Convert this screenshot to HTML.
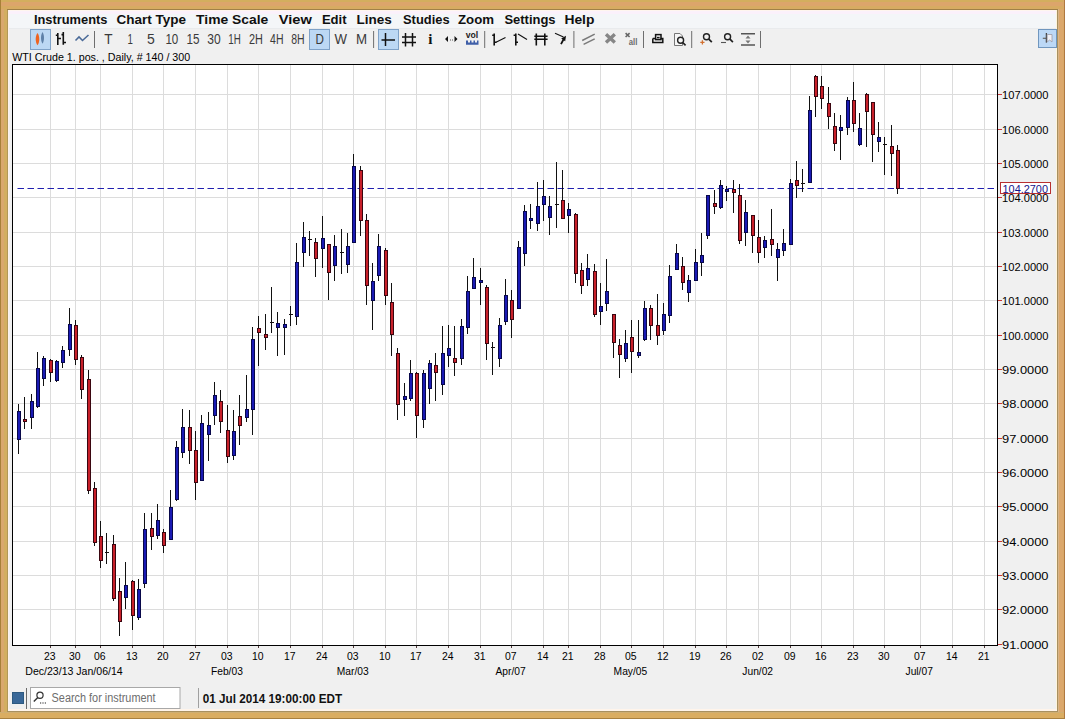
<!DOCTYPE html><html><head><meta charset="utf-8"><style>html,body{margin:0;padding:0;width:1065px;height:719px;overflow:hidden;background:#F0F0F0}svg{display:block}</style></head><body><svg width="1065" height="719" viewBox="0 0 1065 719" font-family="Liberation Sans, sans-serif"><defs><linearGradient id="topb" x1="0" y1="0" x2="0" y2="1"><stop offset="0" stop-color="#D2AC5A"/><stop offset="0.5" stop-color="#DDA56A"/><stop offset="0.85" stop-color="#D8A663"/><stop offset="1" stop-color="#B08A48"/></linearGradient><linearGradient id="menub" x1="0" y1="0" x2="0" y2="1"><stop offset="0" stop-color="#FBFBFE"/><stop offset="1" stop-color="#EEF1F5"/></linearGradient></defs>
<rect x="0" y="0" width="1065" height="719" fill="#DAAA68"/>
<rect x="0" y="0" width="1065" height="2" fill="#D3AE5E"/><rect x="0" y="2" width="1065" height="4" fill="#DCA56B"/><rect x="0" y="6" width="1065" height="3" fill="#D7AB62"/>
<rect x="0" y="0" width="1" height="719" fill="#A88038"/><rect x="1" y="9" width="3" height="703" fill="#D9A86E"/><rect x="4" y="9" width="3" height="703" fill="#D3AE60"/><rect x="7" y="9" width="1" height="703" fill="#B09858"/>
<rect x="1058" y="9" width="1" height="703" fill="#D8B488"/><rect x="1059" y="9" width="4" height="703" fill="#DCA86C"/><rect x="1063" y="0" width="1" height="719" fill="#D8A868"/><rect x="1064" y="0" width="1" height="719" fill="#B07840"/>
<rect x="0" y="712" width="1064" height="1" fill="#CFAE72"/><rect x="0" y="713" width="1064" height="5" fill="#DAAD62"/><rect x="0" y="718" width="1065" height="1" fill="#A88040"/>
<rect x="8" y="10" width="1049" height="701" fill="#F0F0F0"/>
<rect x="8" y="10" width="1049" height="18" fill="#F4F6F8"/><rect x="8" y="10" width="1049" height="1" fill="#FFF6EE"/><rect x="8" y="11" width="1049" height="3" fill="#FBF1FB"/><rect x="8" y="28" width="1049" height="1" fill="#E9EBED"/>
<rect x="8" y="709" width="1049" height="2" fill="#FFF4EA"/>
<rect x="8" y="10" width="1" height="699" fill="#FFF2EA"/><rect x="1056" y="10" width="1" height="699" fill="#FFF4DC"/>
<rect x="7" y="711" width="1051" height="1" fill="#A89060"/>
<rect x="1057" y="9" width="1" height="703" fill="#A89060"/>
<rect x="7" y="9" width="1051" height="1" fill="#A08048"/>
<text x="33.9" y="23.8" font-size="13" font-weight="bold" fill="#101010" text-anchor="start" textLength="73.6" lengthAdjust="spacingAndGlyphs">Instruments</text>
<text x="116.4" y="23.8" font-size="13" font-weight="bold" fill="#101010" text-anchor="start" textLength="69.6" lengthAdjust="spacingAndGlyphs">Chart Type</text>
<text x="196.1" y="23.8" font-size="13" font-weight="bold" fill="#101010" text-anchor="start" textLength="72.2" lengthAdjust="spacingAndGlyphs">Time Scale</text>
<text x="278.7" y="23.8" font-size="13" font-weight="bold" fill="#101010" text-anchor="start" textLength="33.1" lengthAdjust="spacingAndGlyphs">View</text>
<text x="321.9" y="23.8" font-size="13" font-weight="bold" fill="#101010" text-anchor="start" textLength="24.7" lengthAdjust="spacingAndGlyphs">Edit</text>
<text x="356.4" y="23.8" font-size="13" font-weight="bold" fill="#101010" text-anchor="start" textLength="35.3" lengthAdjust="spacingAndGlyphs">Lines</text>
<text x="403.0" y="23.8" font-size="13" font-weight="bold" fill="#101010" text-anchor="start" textLength="46.6" lengthAdjust="spacingAndGlyphs">Studies</text>
<text x="458.0" y="23.8" font-size="13" font-weight="bold" fill="#101010" text-anchor="start" textLength="36.0" lengthAdjust="spacingAndGlyphs">Zoom</text>
<text x="504.4" y="23.8" font-size="13" font-weight="bold" fill="#101010" text-anchor="start" textLength="51.2" lengthAdjust="spacingAndGlyphs">Settings</text>
<text x="564.4" y="23.8" font-size="13" font-weight="bold" fill="#101010" text-anchor="start" textLength="30.0" lengthAdjust="spacingAndGlyphs">Help</text>
<rect x="30.5" y="29.5" width="20" height="20" fill="#BCD8F4" stroke="#7FA2C8" stroke-width="1"/>
<path d="M37.5 32.9 C39.9 36 39.9 42 37.5 45.3 C35.1 42 35.1 36 37.5 32.9 Z" fill="#EE6422"/>
<path d="M42.5 32.1 C44.5 35 44.5 41 42.5 43.8 C40.5 41 40.5 35 42.5 32.1 Z" fill="#5E80A8"/>
<g stroke="#111" stroke-width="1.6" fill="none"><path d="M57.8 33 V45 M55.8 35.3 H57.8 M57.8 38.5 H61 M63.3 32 V44.7 M61.5 34.6 H63.3 M63.3 42.5 H66"/></g>
<path d="M75.5 40.5 L79 37 L82.5 40.5 L88.5 35" stroke="#4A6A98" stroke-width="1.6" fill="none"/>
<rect x="94.0" y="31" width="1" height="17" fill="#6E6E6E"/>
<rect x="309.5" y="29.5" width="20" height="20" fill="#BCD8F4" stroke="#7FA2C8" stroke-width="1"/>
<text x="104.2" y="43.9" font-size="14.3" font-weight="normal" fill="#3A3A3A" text-anchor="start" textLength="8.3" lengthAdjust="spacingAndGlyphs">T</text>
<text x="127.4" y="43.9" font-size="14.3" font-weight="normal" fill="#3A3A3A" text-anchor="start" textLength="5.4" lengthAdjust="spacingAndGlyphs">1</text>
<text x="147.1" y="43.9" font-size="14.3" font-weight="normal" fill="#3A3A3A" text-anchor="start" textLength="7.8" lengthAdjust="spacingAndGlyphs">5</text>
<text x="165.4" y="43.9" font-size="14.3" font-weight="normal" fill="#3A3A3A" text-anchor="start" textLength="12.9" lengthAdjust="spacingAndGlyphs">10</text>
<text x="186.5" y="43.9" font-size="14.3" font-weight="normal" fill="#3A3A3A" text-anchor="start" textLength="13.0" lengthAdjust="spacingAndGlyphs">15</text>
<text x="207.20000000000002" y="43.9" font-size="14.3" font-weight="normal" fill="#3A3A3A" text-anchor="start" textLength="13.4" lengthAdjust="spacingAndGlyphs">30</text>
<text x="228.3" y="43.9" font-size="14.3" font-weight="normal" fill="#3A3A3A" text-anchor="start" textLength="12.5" lengthAdjust="spacingAndGlyphs">1H</text>
<text x="249.0" y="43.9" font-size="14.3" font-weight="normal" fill="#3A3A3A" text-anchor="start" textLength="13.9" lengthAdjust="spacingAndGlyphs">2H</text>
<text x="270.09999999999997" y="43.9" font-size="14.3" font-weight="normal" fill="#3A3A3A" text-anchor="start" textLength="13.4" lengthAdjust="spacingAndGlyphs">4H</text>
<text x="291.2" y="43.9" font-size="14.3" font-weight="normal" fill="#3A3A3A" text-anchor="start" textLength="13.4" lengthAdjust="spacingAndGlyphs">8H</text>
<text x="315.4" y="43.9" font-size="14.3" font-weight="normal" fill="#3A3A3A" text-anchor="start" textLength="8.4" lengthAdjust="spacingAndGlyphs">D</text>
<text x="334.4" y="43.9" font-size="14.3" font-weight="normal" fill="#3A3A3A" text-anchor="start" textLength="12.5" lengthAdjust="spacingAndGlyphs">W</text>
<text x="356.0" y="43.9" font-size="14.3" font-weight="normal" fill="#3A3A3A" text-anchor="start" textLength="11.1" lengthAdjust="spacingAndGlyphs">M</text>
<rect x="373.1" y="31" width="1" height="17" fill="#6E6E6E"/>
<rect x="378.5" y="29.5" width="20" height="20" fill="#BCD8F4" stroke="#7FA2C8" stroke-width="1"/>
<path d="M381.5 40 H395 M385.5 33 V46" stroke="#111" stroke-width="1.5"/>
<path d="M402 37 H416 M402 42.5 H416 M405.5 33 V46.5 M412.5 33 V46.5" stroke="#111" stroke-width="1.5"/>
<text x="430.3" y="44.2" font-size="15" font-weight="bold" fill="#111" text-anchor="middle" font-family="Liberation Serif, serif">i</text>
<path d="M445 39 L448 36 V42 Z M457.5 39 L454.5 36 V42 Z" fill="#111"/><rect x="450" y="39.5" width="1" height="1" fill="#555"/><rect x="452" y="39.5" width="1" height="1" fill="#555"/>
<text x="471.9" y="38.3" font-size="9" font-weight="bold" fill="#222" text-anchor="middle" textLength="12.5" lengthAdjust="spacingAndGlyphs">vol</text>
<path d="M466 44.8 H478.5 V40.5 H477 V42.5 H475 V40.5 H473.5 V42.5 H471.5 V40.5 H470 V42.5 H468 V40.5 H466 Z" fill="#3F5FA8"/>
<rect x="484.2" y="31" width="1" height="17" fill="#6E6E6E"/>
<g stroke="#111" stroke-width="1.6" fill="none"><path d="M494.2 33.5 V45.5 M492.2 35.2 H494.2 M494.2 42.3 H496.5"/><path stroke-width="1.1" d="M496 42.3 L505.5 37.5"/><path d="M515.8 33.5 V45.5 M513.6 35.2 H515.8 M515.8 42.3 H518"/><path stroke-width="1.1" d="M518 34 L527 39.5"/><path d="M536.3 33.5 V45.5 M544.8 33.5 V45.5 M534.3 36.3 H547.6 M534.3 39.3 H547.6"/><path stroke-width="1.1" d="M555 33.3 L563.5 37"/><path stroke-width="1.8" d="M561 44.2 L564 38.5"/></g>
<path d="M566 35.8 L565.2 41.2 L561.2 38.6 Z" fill="#111"/>
<rect x="573.4" y="31" width="1" height="17" fill="#6E6E6E"/>
<path d="M582.2 40.5 L594.7 34.2 M583.6 44.4 L594.7 38.8" stroke="#7A7A7A" stroke-width="1.5"/>
<path d="M606 34.3 L614.8 42.4 M614.8 34.3 L606 42.4" stroke="#868686" stroke-width="3.4"/>
<path d="M625.6 33.2 L629.6 37 M629.6 33.2 L625.6 37" stroke="#666" stroke-width="1.6"/>
<text x="628.8" y="44.8" font-size="8.5" font-weight="bold" fill="#6A6A6A" text-anchor="start" textLength="8.6" lengthAdjust="spacingAndGlyphs">all</text>
<rect x="643.0" y="31" width="1" height="17" fill="#6E6E6E"/>
<g stroke="#111" stroke-width="1.5" fill="none"><rect x="655.6" y="34.6" width="5.4" height="5"/><path d="M657 37.6 H659.6"/><path d="M652.8 38.4 V42.4 H662.8 V38.4 H660.5 M655.6 38.4 H652.8"/></g>
<path d="M674.5 33.5 H680 L682.5 36 V45.5 H674.5 Z" stroke="#777" stroke-width="1" fill="#F6F6F6"/>
<circle cx="680.6" cy="40.3" r="3" stroke="#222" stroke-width="1.4" fill="#F6F6F6"/><path d="M682.8 42.6 L685.6 45.4" stroke="#222" stroke-width="1.6"/>
<rect x="691.2" y="31" width="1" height="17" fill="#6E6E6E"/>
<circle cx="706.5" cy="36.7" r="3" stroke="#222" stroke-width="1.4" fill="none"/><path d="M708.6 38.8 L711.8 42.1" stroke="#222" stroke-width="1.7"/>
<path d="M700.3 42.3 H704.5 M702.4 40.2 V44.4" stroke="#D27030" stroke-width="1.3"/>
<circle cx="727.6" cy="36.7" r="3" stroke="#222" stroke-width="1.4" fill="none"/><path d="M729.7 38.8 L732.9 42.1" stroke="#222" stroke-width="1.7"/>
<path d="M721 42.5 H726" stroke="#555" stroke-width="1.1"/>
<path d="M741 33.8 H755 M741 45 H755" stroke="#555" stroke-width="1.6"/><path d="M748 35.5 L750.5 38.5 H745.5 Z M748 43.5 L750.5 40.5 H745.5 Z" fill="#777"/>
<rect x="760.0" y="31" width="1" height="17" fill="#6E6E6E"/>
<rect x="1038.5" y="29.5" width="18" height="18" fill="#BCD8F6" stroke="#7096BE"/>
<path d="M1042.8 38.3 H1046" stroke="#666" stroke-width="1.2"/><path d="M1046.4 33 V42.6" stroke="#444" stroke-width="1.3"/>
<path d="M1047.2 34.5 H1052 V42 L1049.6 40 L1047.2 42 Z" fill="#F2F0F4" stroke="#9A9AA8" stroke-width="0.8"/>
<text x="12.2" y="60.9" font-size="11" font-weight="normal" fill="#000" text-anchor="start" textLength="178" lengthAdjust="spacingAndGlyphs">WTI Crude 1. pos. , Daily, # 140 / 300</text>
<rect x="13" y="65" width="984" height="580" fill="#FFFFFF"/>
<path d="M998 644.5 H1002" stroke="#C83838" stroke-width="1"/>
<text x="1002" y="648.8" font-size="11" font-weight="normal" fill="#000" text-anchor="start" textLength="46.5" lengthAdjust="spacingAndGlyphs">91.0000</text>
<path d="M13 609.5 H997" stroke="#DCDCDC" stroke-width="1"/>
<path d="M998 609.5 H1002" stroke="#C83838" stroke-width="1"/>
<text x="1002" y="613.8" font-size="11" font-weight="normal" fill="#000" text-anchor="start" textLength="46.5" lengthAdjust="spacingAndGlyphs">92.0000</text>
<path d="M13 575.5 H997" stroke="#DCDCDC" stroke-width="1"/>
<path d="M998 575.5 H1002" stroke="#C83838" stroke-width="1"/>
<text x="1002" y="579.8" font-size="11" font-weight="normal" fill="#000" text-anchor="start" textLength="46.5" lengthAdjust="spacingAndGlyphs">93.0000</text>
<path d="M13 541.5 H997" stroke="#DCDCDC" stroke-width="1"/>
<path d="M998 541.5 H1002" stroke="#C83838" stroke-width="1"/>
<text x="1002" y="545.8" font-size="11" font-weight="normal" fill="#000" text-anchor="start" textLength="46.5" lengthAdjust="spacingAndGlyphs">94.0000</text>
<path d="M13 506.5 H997" stroke="#DCDCDC" stroke-width="1"/>
<path d="M998 506.5 H1002" stroke="#C83838" stroke-width="1"/>
<text x="1002" y="510.8" font-size="11" font-weight="normal" fill="#000" text-anchor="start" textLength="46.5" lengthAdjust="spacingAndGlyphs">95.0000</text>
<path d="M13 472.5 H997" stroke="#DCDCDC" stroke-width="1"/>
<path d="M998 472.5 H1002" stroke="#C83838" stroke-width="1"/>
<text x="1002" y="476.8" font-size="11" font-weight="normal" fill="#000" text-anchor="start" textLength="46.5" lengthAdjust="spacingAndGlyphs">96.0000</text>
<path d="M13 438.5 H997" stroke="#DCDCDC" stroke-width="1"/>
<path d="M998 438.5 H1002" stroke="#C83838" stroke-width="1"/>
<text x="1002" y="442.8" font-size="11" font-weight="normal" fill="#000" text-anchor="start" textLength="46.5" lengthAdjust="spacingAndGlyphs">97.0000</text>
<path d="M13 403.5 H997" stroke="#DCDCDC" stroke-width="1"/>
<path d="M998 403.5 H1002" stroke="#C83838" stroke-width="1"/>
<text x="1002" y="407.8" font-size="11" font-weight="normal" fill="#000" text-anchor="start" textLength="46.5" lengthAdjust="spacingAndGlyphs">98.0000</text>
<path d="M13 369.5 H997" stroke="#DCDCDC" stroke-width="1"/>
<path d="M998 369.5 H1002" stroke="#C83838" stroke-width="1"/>
<text x="1002" y="373.8" font-size="11" font-weight="normal" fill="#000" text-anchor="start" textLength="46.5" lengthAdjust="spacingAndGlyphs">99.0000</text>
<path d="M13 335.5 H997" stroke="#DCDCDC" stroke-width="1"/>
<path d="M998 335.5 H1002" stroke="#C83838" stroke-width="1"/>
<text x="1002" y="339.8" font-size="11" font-weight="normal" fill="#000" text-anchor="start" textLength="46.5" lengthAdjust="spacingAndGlyphs">100.0000</text>
<path d="M13 300.5 H997" stroke="#DCDCDC" stroke-width="1"/>
<path d="M998 300.5 H1002" stroke="#C83838" stroke-width="1"/>
<text x="1002" y="304.8" font-size="11" font-weight="normal" fill="#000" text-anchor="start" textLength="46.5" lengthAdjust="spacingAndGlyphs">101.0000</text>
<path d="M13 266.5 H997" stroke="#DCDCDC" stroke-width="1"/>
<path d="M998 266.5 H1002" stroke="#C83838" stroke-width="1"/>
<text x="1002" y="270.8" font-size="11" font-weight="normal" fill="#000" text-anchor="start" textLength="46.5" lengthAdjust="spacingAndGlyphs">102.0000</text>
<path d="M13 232.5 H997" stroke="#DCDCDC" stroke-width="1"/>
<path d="M998 232.5 H1002" stroke="#C83838" stroke-width="1"/>
<text x="1002" y="236.8" font-size="11" font-weight="normal" fill="#000" text-anchor="start" textLength="46.5" lengthAdjust="spacingAndGlyphs">103.0000</text>
<path d="M13 197.5 H997" stroke="#DCDCDC" stroke-width="1"/>
<path d="M998 197.5 H1002" stroke="#C83838" stroke-width="1"/>
<text x="1002" y="201.8" font-size="11" font-weight="normal" fill="#000" text-anchor="start" textLength="46.5" lengthAdjust="spacingAndGlyphs">104.0000</text>
<path d="M13 163.5 H997" stroke="#DCDCDC" stroke-width="1"/>
<path d="M998 163.5 H1002" stroke="#C83838" stroke-width="1"/>
<text x="1002" y="167.8" font-size="11" font-weight="normal" fill="#000" text-anchor="start" textLength="46.5" lengthAdjust="spacingAndGlyphs">105.0000</text>
<path d="M13 129.5 H997" stroke="#DCDCDC" stroke-width="1"/>
<path d="M998 129.5 H1002" stroke="#C83838" stroke-width="1"/>
<text x="1002" y="133.8" font-size="11" font-weight="normal" fill="#000" text-anchor="start" textLength="46.5" lengthAdjust="spacingAndGlyphs">106.0000</text>
<path d="M13 94.5 H997" stroke="#DCDCDC" stroke-width="1"/>
<path d="M998 94.5 H1002" stroke="#C83838" stroke-width="1"/>
<text x="1002" y="98.8" font-size="11" font-weight="normal" fill="#000" text-anchor="start" textLength="46.5" lengthAdjust="spacingAndGlyphs">107.0000</text>
<path d="M50.5 65 V645" stroke="#DCDCDC" stroke-width="1"/>
<path d="M50.5 646 V648" stroke="#503838" stroke-width="1"/>
<text x="49.7" y="659.9" font-size="11" font-weight="normal" fill="#000" text-anchor="middle" textLength="11.6" lengthAdjust="spacingAndGlyphs">23</text>
<path d="M75.5 65 V645" stroke="#DCDCDC" stroke-width="1"/>
<path d="M75.5 646 V648" stroke="#503838" stroke-width="1"/>
<text x="74.7" y="659.9" font-size="11" font-weight="normal" fill="#000" text-anchor="middle" textLength="11.6" lengthAdjust="spacingAndGlyphs">30</text>
<path d="M100.5 65 V645" stroke="#DCDCDC" stroke-width="1"/>
<path d="M100.5 646 V648" stroke="#503838" stroke-width="1"/>
<text x="99.7" y="659.9" font-size="11" font-weight="normal" fill="#000" text-anchor="middle" textLength="11.6" lengthAdjust="spacingAndGlyphs">06</text>
<path d="M132.5 65 V645" stroke="#DCDCDC" stroke-width="1"/>
<path d="M132.5 646 V648" stroke="#503838" stroke-width="1"/>
<text x="131.7" y="659.9" font-size="11" font-weight="normal" fill="#000" text-anchor="middle" textLength="11.6" lengthAdjust="spacingAndGlyphs">13</text>
<path d="M163.5 65 V645" stroke="#DCDCDC" stroke-width="1"/>
<path d="M163.5 646 V648" stroke="#503838" stroke-width="1"/>
<text x="162.7" y="659.9" font-size="11" font-weight="normal" fill="#000" text-anchor="middle" textLength="11.6" lengthAdjust="spacingAndGlyphs">20</text>
<path d="M195.5 65 V645" stroke="#DCDCDC" stroke-width="1"/>
<path d="M195.5 646 V648" stroke="#503838" stroke-width="1"/>
<text x="194.7" y="659.9" font-size="11" font-weight="normal" fill="#000" text-anchor="middle" textLength="11.6" lengthAdjust="spacingAndGlyphs">27</text>
<path d="M227.5 65 V645" stroke="#DCDCDC" stroke-width="1"/>
<path d="M227.5 646 V648" stroke="#503838" stroke-width="1"/>
<text x="226.7" y="659.9" font-size="11" font-weight="normal" fill="#000" text-anchor="middle" textLength="11.6" lengthAdjust="spacingAndGlyphs">03</text>
<path d="M258.5 65 V645" stroke="#DCDCDC" stroke-width="1"/>
<path d="M258.5 646 V648" stroke="#503838" stroke-width="1"/>
<text x="257.7" y="659.9" font-size="11" font-weight="normal" fill="#000" text-anchor="middle" textLength="11.6" lengthAdjust="spacingAndGlyphs">10</text>
<path d="M290.5 65 V645" stroke="#DCDCDC" stroke-width="1"/>
<path d="M290.5 646 V648" stroke="#503838" stroke-width="1"/>
<text x="289.7" y="659.9" font-size="11" font-weight="normal" fill="#000" text-anchor="middle" textLength="11.6" lengthAdjust="spacingAndGlyphs">17</text>
<path d="M322.5 65 V645" stroke="#DCDCDC" stroke-width="1"/>
<path d="M322.5 646 V648" stroke="#503838" stroke-width="1"/>
<text x="321.7" y="659.9" font-size="11" font-weight="normal" fill="#000" text-anchor="middle" textLength="11.6" lengthAdjust="spacingAndGlyphs">24</text>
<path d="M353.5 65 V645" stroke="#DCDCDC" stroke-width="1"/>
<path d="M353.5 646 V648" stroke="#503838" stroke-width="1"/>
<text x="352.7" y="659.9" font-size="11" font-weight="normal" fill="#000" text-anchor="middle" textLength="11.6" lengthAdjust="spacingAndGlyphs">03</text>
<path d="M385.5 65 V645" stroke="#DCDCDC" stroke-width="1"/>
<path d="M385.5 646 V648" stroke="#503838" stroke-width="1"/>
<text x="384.7" y="659.9" font-size="11" font-weight="normal" fill="#000" text-anchor="middle" textLength="11.6" lengthAdjust="spacingAndGlyphs">10</text>
<path d="M416.5 65 V645" stroke="#DCDCDC" stroke-width="1"/>
<path d="M416.5 646 V648" stroke="#503838" stroke-width="1"/>
<text x="415.7" y="659.9" font-size="11" font-weight="normal" fill="#000" text-anchor="middle" textLength="11.6" lengthAdjust="spacingAndGlyphs">17</text>
<path d="M448.5 65 V645" stroke="#DCDCDC" stroke-width="1"/>
<path d="M448.5 646 V648" stroke="#503838" stroke-width="1"/>
<text x="447.7" y="659.9" font-size="11" font-weight="normal" fill="#000" text-anchor="middle" textLength="11.6" lengthAdjust="spacingAndGlyphs">24</text>
<path d="M480.5 65 V645" stroke="#DCDCDC" stroke-width="1"/>
<path d="M480.5 646 V648" stroke="#503838" stroke-width="1"/>
<text x="479.7" y="659.9" font-size="11" font-weight="normal" fill="#000" text-anchor="middle" textLength="11.6" lengthAdjust="spacingAndGlyphs">31</text>
<path d="M511.5 65 V645" stroke="#DCDCDC" stroke-width="1"/>
<path d="M511.5 646 V648" stroke="#503838" stroke-width="1"/>
<text x="510.7" y="659.9" font-size="11" font-weight="normal" fill="#000" text-anchor="middle" textLength="11.6" lengthAdjust="spacingAndGlyphs">07</text>
<path d="M543.5 65 V645" stroke="#DCDCDC" stroke-width="1"/>
<path d="M543.5 646 V648" stroke="#503838" stroke-width="1"/>
<text x="542.7" y="659.9" font-size="11" font-weight="normal" fill="#000" text-anchor="middle" textLength="11.6" lengthAdjust="spacingAndGlyphs">14</text>
<path d="M568.5 65 V645" stroke="#DCDCDC" stroke-width="1"/>
<path d="M568.5 646 V648" stroke="#503838" stroke-width="1"/>
<text x="567.7" y="659.9" font-size="11" font-weight="normal" fill="#000" text-anchor="middle" textLength="11.6" lengthAdjust="spacingAndGlyphs">21</text>
<path d="M600.5 65 V645" stroke="#DCDCDC" stroke-width="1"/>
<path d="M600.5 646 V648" stroke="#503838" stroke-width="1"/>
<text x="599.7" y="659.9" font-size="11" font-weight="normal" fill="#000" text-anchor="middle" textLength="11.6" lengthAdjust="spacingAndGlyphs">28</text>
<path d="M631.5 65 V645" stroke="#DCDCDC" stroke-width="1"/>
<path d="M631.5 646 V648" stroke="#503838" stroke-width="1"/>
<text x="630.7" y="659.9" font-size="11" font-weight="normal" fill="#000" text-anchor="middle" textLength="11.6" lengthAdjust="spacingAndGlyphs">05</text>
<path d="M663.5 65 V645" stroke="#DCDCDC" stroke-width="1"/>
<path d="M663.5 646 V648" stroke="#503838" stroke-width="1"/>
<text x="662.7" y="659.9" font-size="11" font-weight="normal" fill="#000" text-anchor="middle" textLength="11.6" lengthAdjust="spacingAndGlyphs">12</text>
<path d="M695.5 65 V645" stroke="#DCDCDC" stroke-width="1"/>
<path d="M695.5 646 V648" stroke="#503838" stroke-width="1"/>
<text x="694.7" y="659.9" font-size="11" font-weight="normal" fill="#000" text-anchor="middle" textLength="11.6" lengthAdjust="spacingAndGlyphs">19</text>
<path d="M726.5 65 V645" stroke="#DCDCDC" stroke-width="1"/>
<path d="M726.5 646 V648" stroke="#503838" stroke-width="1"/>
<text x="725.7" y="659.9" font-size="11" font-weight="normal" fill="#000" text-anchor="middle" textLength="11.6" lengthAdjust="spacingAndGlyphs">26</text>
<path d="M758.5 65 V645" stroke="#DCDCDC" stroke-width="1"/>
<path d="M758.5 646 V648" stroke="#503838" stroke-width="1"/>
<text x="757.7" y="659.9" font-size="11" font-weight="normal" fill="#000" text-anchor="middle" textLength="11.6" lengthAdjust="spacingAndGlyphs">02</text>
<path d="M790.5 65 V645" stroke="#DCDCDC" stroke-width="1"/>
<path d="M790.5 646 V648" stroke="#503838" stroke-width="1"/>
<text x="789.7" y="659.9" font-size="11" font-weight="normal" fill="#000" text-anchor="middle" textLength="11.6" lengthAdjust="spacingAndGlyphs">09</text>
<path d="M821.5 65 V645" stroke="#DCDCDC" stroke-width="1"/>
<path d="M821.5 646 V648" stroke="#503838" stroke-width="1"/>
<text x="820.7" y="659.9" font-size="11" font-weight="normal" fill="#000" text-anchor="middle" textLength="11.6" lengthAdjust="spacingAndGlyphs">16</text>
<path d="M853.5 65 V645" stroke="#DCDCDC" stroke-width="1"/>
<path d="M853.5 646 V648" stroke="#503838" stroke-width="1"/>
<text x="852.7" y="659.9" font-size="11" font-weight="normal" fill="#000" text-anchor="middle" textLength="11.6" lengthAdjust="spacingAndGlyphs">23</text>
<path d="M884.5 65 V645" stroke="#DCDCDC" stroke-width="1"/>
<path d="M884.5 646 V648" stroke="#503838" stroke-width="1"/>
<text x="883.7" y="659.9" font-size="11" font-weight="normal" fill="#000" text-anchor="middle" textLength="11.6" lengthAdjust="spacingAndGlyphs">30</text>
<path d="M920.5 65 V645" stroke="#DCDCDC" stroke-width="1"/>
<path d="M920.5 646 V648" stroke="#503838" stroke-width="1"/>
<text x="919.7" y="659.9" font-size="11" font-weight="normal" fill="#000" text-anchor="middle" textLength="11.6" lengthAdjust="spacingAndGlyphs">07</text>
<path d="M952.5 65 V645" stroke="#DCDCDC" stroke-width="1"/>
<path d="M952.5 646 V648" stroke="#503838" stroke-width="1"/>
<text x="951.7" y="659.9" font-size="11" font-weight="normal" fill="#000" text-anchor="middle" textLength="11.6" lengthAdjust="spacingAndGlyphs">14</text>
<path d="M984.5 65 V645" stroke="#DCDCDC" stroke-width="1"/>
<path d="M984.5 646 V648" stroke="#503838" stroke-width="1"/>
<text x="983.7" y="659.9" font-size="11" font-weight="normal" fill="#000" text-anchor="middle" textLength="11.6" lengthAdjust="spacingAndGlyphs">21</text>
<text x="25.3" y="675.2" font-size="11" font-weight="normal" fill="#000" text-anchor="start" textLength="97.4" lengthAdjust="spacingAndGlyphs">Dec/23/13 Jan/06/14</text>
<text x="226.9" y="675.2" font-size="11" font-weight="normal" fill="#000" text-anchor="middle" textLength="31.88" lengthAdjust="spacingAndGlyphs">Feb/03</text>
<text x="352.7" y="675.2" font-size="11" font-weight="normal" fill="#000" text-anchor="middle" textLength="31.85" lengthAdjust="spacingAndGlyphs">Mar/03</text>
<text x="510.6" y="675.2" font-size="11" font-weight="normal" fill="#000" text-anchor="middle" textLength="30.17" lengthAdjust="spacingAndGlyphs">Apr/07</text>
<text x="630.4" y="675.2" font-size="11" font-weight="normal" fill="#000" text-anchor="middle" textLength="33.57" lengthAdjust="spacingAndGlyphs">May/05</text>
<text x="757.7" y="675.2" font-size="11" font-weight="normal" fill="#000" text-anchor="middle" textLength="30.75" lengthAdjust="spacingAndGlyphs">Jun/02</text>
<text x="919.2" y="675.2" font-size="11" font-weight="normal" fill="#000" text-anchor="middle" textLength="27.32" lengthAdjust="spacingAndGlyphs">Jul/07</text>
<path d="M17.5 188.5 H994" stroke="#2020B0" stroke-width="1.1" stroke-dasharray="6.5,3.5"/>
<rect x="18" y="404" width="1" height="50" fill="#111"/>
<rect x="17.5" y="411.5" width="3" height="28" fill="#1A1AB4" stroke="#08084A" stroke-width="1"/>
<rect x="24" y="397" width="1" height="32" fill="#111"/>
<rect x="23.5" y="419.5" width="3" height="2" fill="#C8202A" stroke="#3A0610" stroke-width="1"/>
<rect x="31" y="394" width="1" height="35" fill="#111"/>
<rect x="30.5" y="401.5" width="3" height="16" fill="#1A1AB4" stroke="#08084A" stroke-width="1"/>
<rect x="37" y="352" width="1" height="56" fill="#111"/>
<rect x="36.5" y="368.5" width="3" height="38" fill="#1A1AB4" stroke="#08084A" stroke-width="1"/>
<rect x="43" y="356" width="1" height="30" fill="#111"/>
<rect x="42.5" y="358.5" width="3" height="20" fill="#1A1AB4" stroke="#08084A" stroke-width="1"/>
<rect x="50" y="359" width="1" height="23" fill="#111"/>
<rect x="49.5" y="360.5" width="3" height="12" fill="#C8202A" stroke="#3A0610" stroke-width="1"/>
<rect x="56" y="360" width="1" height="22" fill="#111"/>
<rect x="55.5" y="361.5" width="3" height="19" fill="#1A1AB4" stroke="#08084A" stroke-width="1"/>
<rect x="62" y="346" width="1" height="22" fill="#111"/>
<rect x="61.5" y="350.5" width="3" height="12" fill="#1A1AB4" stroke="#08084A" stroke-width="1"/>
<rect x="69" y="308" width="1" height="48" fill="#111"/>
<rect x="68.5" y="324.5" width="3" height="25" fill="#1A1AB4" stroke="#08084A" stroke-width="1"/>
<rect x="75" y="320" width="1" height="45" fill="#111"/>
<rect x="74.5" y="325.5" width="3" height="34" fill="#C8202A" stroke="#3A0610" stroke-width="1"/>
<rect x="81" y="355" width="1" height="44" fill="#111"/>
<rect x="80.5" y="357.5" width="3" height="32" fill="#C8202A" stroke="#3A0610" stroke-width="1"/>
<rect x="88" y="370" width="1" height="124" fill="#111"/>
<rect x="87.5" y="379.5" width="3" height="111" fill="#C8202A" stroke="#3A0610" stroke-width="1"/>
<rect x="94" y="482" width="1" height="64" fill="#111"/>
<rect x="93.5" y="488.5" width="3" height="54" fill="#C8202A" stroke="#3A0610" stroke-width="1"/>
<rect x="100" y="521" width="1" height="47" fill="#111"/>
<rect x="99.5" y="536.5" width="3" height="24" fill="#C8202A" stroke="#3A0610" stroke-width="1"/>
<rect x="106" y="533" width="1" height="31" fill="#111"/>
<rect x="105" y="552" width="4" height="1" fill="#151010"/>
<rect x="113" y="535" width="1" height="66" fill="#111"/>
<rect x="112.5" y="544.5" width="3" height="54" fill="#C8202A" stroke="#3A0610" stroke-width="1"/>
<rect x="119" y="578" width="1" height="58" fill="#111"/>
<rect x="118.5" y="591.5" width="3" height="30" fill="#C8202A" stroke="#3A0610" stroke-width="1"/>
<rect x="125" y="562" width="1" height="47" fill="#111"/>
<rect x="124.5" y="585.5" width="3" height="12" fill="#1A1AB4" stroke="#08084A" stroke-width="1"/>
<rect x="132" y="580" width="1" height="50" fill="#111"/>
<rect x="131.5" y="581.5" width="3" height="34" fill="#C8202A" stroke="#3A0610" stroke-width="1"/>
<rect x="138" y="579" width="1" height="41" fill="#111"/>
<rect x="137.5" y="589.5" width="3" height="28" fill="#1A1AB4" stroke="#08084A" stroke-width="1"/>
<rect x="144" y="513" width="1" height="75" fill="#111"/>
<rect x="143.5" y="529.5" width="3" height="54" fill="#1A1AB4" stroke="#08084A" stroke-width="1"/>
<rect x="151" y="513" width="1" height="37" fill="#111"/>
<rect x="150.5" y="528.5" width="3" height="8" fill="#C8202A" stroke="#3A0610" stroke-width="1"/>
<rect x="157" y="504" width="1" height="35" fill="#111"/>
<rect x="156.5" y="520.5" width="3" height="15" fill="#1A1AB4" stroke="#08084A" stroke-width="1"/>
<rect x="163" y="529" width="1" height="24" fill="#111"/>
<rect x="162.5" y="532.5" width="3" height="13" fill="#C8202A" stroke="#3A0610" stroke-width="1"/>
<rect x="170" y="490" width="1" height="50" fill="#111"/>
<rect x="169.5" y="507.5" width="3" height="32" fill="#1A1AB4" stroke="#08084A" stroke-width="1"/>
<rect x="176" y="441" width="1" height="60" fill="#111"/>
<rect x="175.5" y="447.5" width="3" height="52" fill="#1A1AB4" stroke="#08084A" stroke-width="1"/>
<rect x="182" y="409" width="1" height="49" fill="#111"/>
<rect x="181.5" y="427.5" width="3" height="25" fill="#1A1AB4" stroke="#08084A" stroke-width="1"/>
<rect x="189" y="410" width="1" height="54" fill="#111"/>
<rect x="188.5" y="427.5" width="3" height="23" fill="#C8202A" stroke="#3A0610" stroke-width="1"/>
<rect x="195" y="431" width="1" height="69" fill="#111"/>
<rect x="194.5" y="450.5" width="3" height="32" fill="#C8202A" stroke="#3A0610" stroke-width="1"/>
<rect x="201" y="415" width="1" height="66" fill="#111"/>
<rect x="200.5" y="423.5" width="3" height="57" fill="#1A1AB4" stroke="#08084A" stroke-width="1"/>
<rect x="208" y="412" width="1" height="49" fill="#111"/>
<rect x="207.5" y="425.5" width="3" height="9" fill="#1A1AB4" stroke="#08084A" stroke-width="1"/>
<rect x="214" y="382" width="1" height="43" fill="#111"/>
<rect x="213.5" y="395.5" width="3" height="20" fill="#1A1AB4" stroke="#08084A" stroke-width="1"/>
<rect x="220" y="390" width="1" height="43" fill="#111"/>
<rect x="219.5" y="401.5" width="3" height="20" fill="#C8202A" stroke="#3A0610" stroke-width="1"/>
<rect x="227" y="405" width="1" height="58" fill="#111"/>
<rect x="226.5" y="430.5" width="3" height="26" fill="#C8202A" stroke="#3A0610" stroke-width="1"/>
<rect x="233" y="410" width="1" height="50" fill="#111"/>
<rect x="232.5" y="431.5" width="3" height="24" fill="#1A1AB4" stroke="#08084A" stroke-width="1"/>
<rect x="239" y="395" width="1" height="50" fill="#111"/>
<rect x="238.5" y="416.5" width="3" height="9" fill="#C8202A" stroke="#3A0610" stroke-width="1"/>
<rect x="246" y="375" width="1" height="47" fill="#111"/>
<rect x="245.5" y="409.5" width="3" height="8" fill="#1A1AB4" stroke="#08084A" stroke-width="1"/>
<rect x="252" y="327" width="1" height="108" fill="#111"/>
<rect x="251.5" y="339.5" width="3" height="70" fill="#1A1AB4" stroke="#08084A" stroke-width="1"/>
<rect x="258" y="316" width="1" height="50" fill="#111"/>
<rect x="257.5" y="328.5" width="3" height="4" fill="#C8202A" stroke="#3A0610" stroke-width="1"/>
<rect x="265" y="314" width="1" height="36" fill="#111"/>
<rect x="264.5" y="334.5" width="3" height="3" fill="#C8202A" stroke="#3A0610" stroke-width="1"/>
<rect x="271" y="287" width="1" height="46" fill="#111"/>
<rect x="270" y="322" width="4" height="1" fill="#151010"/>
<rect x="277" y="312" width="1" height="44" fill="#111"/>
<rect x="276.5" y="323.5" width="3" height="4" fill="#1A1AB4" stroke="#08084A" stroke-width="1"/>
<rect x="284" y="319" width="1" height="36" fill="#111"/>
<rect x="283.5" y="324.5" width="3" height="3" fill="#1A1AB4" stroke="#08084A" stroke-width="1"/>
<rect x="290" y="306" width="1" height="20" fill="#111"/>
<rect x="289" y="314" width="4" height="1" fill="#151010"/>
<rect x="296" y="243" width="1" height="82" fill="#111"/>
<rect x="295.5" y="262.5" width="3" height="54" fill="#1A1AB4" stroke="#08084A" stroke-width="1"/>
<rect x="303" y="222" width="1" height="45" fill="#111"/>
<rect x="302.5" y="237.5" width="3" height="15" fill="#1A1AB4" stroke="#08084A" stroke-width="1"/>
<rect x="309" y="231" width="1" height="25" fill="#111"/>
<rect x="308" y="239" width="4" height="1" fill="#151010"/>
<rect x="315" y="238" width="1" height="39" fill="#111"/>
<rect x="314.5" y="242.5" width="3" height="16" fill="#C8202A" stroke="#3A0610" stroke-width="1"/>
<rect x="322" y="216" width="1" height="52" fill="#111"/>
<rect x="321.5" y="238.5" width="3" height="10" fill="#1A1AB4" stroke="#08084A" stroke-width="1"/>
<rect x="328" y="244" width="1" height="56" fill="#111"/>
<rect x="327.5" y="244.5" width="3" height="28" fill="#C8202A" stroke="#3A0610" stroke-width="1"/>
<rect x="334" y="235" width="1" height="46" fill="#111"/>
<rect x="333.5" y="246.5" width="3" height="19" fill="#1A1AB4" stroke="#08084A" stroke-width="1"/>
<rect x="341" y="229" width="1" height="45" fill="#111"/>
<rect x="340" y="252" width="4" height="1" fill="#151010"/>
<rect x="347" y="233" width="1" height="40" fill="#111"/>
<rect x="346.5" y="246.5" width="3" height="18" fill="#1A1AB4" stroke="#08084A" stroke-width="1"/>
<rect x="353" y="154" width="1" height="89" fill="#111"/>
<rect x="352.5" y="166.5" width="3" height="76" fill="#1A1AB4" stroke="#08084A" stroke-width="1"/>
<rect x="360" y="166" width="1" height="70" fill="#111"/>
<rect x="359.5" y="170.5" width="3" height="50" fill="#C8202A" stroke="#3A0610" stroke-width="1"/>
<rect x="366" y="214" width="1" height="91" fill="#111"/>
<rect x="365.5" y="220.5" width="3" height="65" fill="#C8202A" stroke="#3A0610" stroke-width="1"/>
<rect x="372" y="263" width="1" height="67" fill="#111"/>
<rect x="371.5" y="281.5" width="3" height="19" fill="#1A1AB4" stroke="#08084A" stroke-width="1"/>
<rect x="378" y="234" width="1" height="47" fill="#111"/>
<rect x="377.5" y="246.5" width="3" height="29" fill="#1A1AB4" stroke="#08084A" stroke-width="1"/>
<rect x="385" y="248" width="1" height="57" fill="#111"/>
<rect x="384.5" y="250.5" width="3" height="45" fill="#C8202A" stroke="#3A0610" stroke-width="1"/>
<rect x="391" y="283" width="1" height="73" fill="#111"/>
<rect x="390.5" y="302.5" width="3" height="32" fill="#C8202A" stroke="#3A0610" stroke-width="1"/>
<rect x="397" y="348" width="1" height="72" fill="#111"/>
<rect x="396.5" y="353.5" width="3" height="51" fill="#C8202A" stroke="#3A0610" stroke-width="1"/>
<rect x="404" y="383" width="1" height="33" fill="#111"/>
<rect x="403.5" y="396.5" width="3" height="3" fill="#1A1AB4" stroke="#08084A" stroke-width="1"/>
<rect x="410" y="360" width="1" height="41" fill="#111"/>
<rect x="409.5" y="373.5" width="3" height="25" fill="#1A1AB4" stroke="#08084A" stroke-width="1"/>
<rect x="416" y="372" width="1" height="66" fill="#111"/>
<rect x="415.5" y="373.5" width="3" height="42" fill="#C8202A" stroke="#3A0610" stroke-width="1"/>
<rect x="423" y="370" width="1" height="58" fill="#111"/>
<rect x="422.5" y="373.5" width="3" height="46" fill="#1A1AB4" stroke="#08084A" stroke-width="1"/>
<rect x="429" y="360" width="1" height="44" fill="#111"/>
<rect x="428.5" y="363.5" width="3" height="25" fill="#1A1AB4" stroke="#08084A" stroke-width="1"/>
<rect x="435" y="353" width="1" height="48" fill="#111"/>
<rect x="434.5" y="365.5" width="3" height="7" fill="#C8202A" stroke="#3A0610" stroke-width="1"/>
<rect x="442" y="326" width="1" height="69" fill="#111"/>
<rect x="441.5" y="353.5" width="3" height="31" fill="#1A1AB4" stroke="#08084A" stroke-width="1"/>
<rect x="448" y="325" width="1" height="42" fill="#111"/>
<rect x="447.5" y="348.5" width="3" height="7" fill="#1A1AB4" stroke="#08084A" stroke-width="1"/>
<rect x="454" y="326" width="1" height="50" fill="#111"/>
<rect x="453.5" y="358.5" width="3" height="4" fill="#C8202A" stroke="#3A0610" stroke-width="1"/>
<rect x="461" y="319" width="1" height="46" fill="#111"/>
<rect x="460.5" y="326.5" width="3" height="32" fill="#1A1AB4" stroke="#08084A" stroke-width="1"/>
<rect x="467" y="276" width="1" height="58" fill="#111"/>
<rect x="466.5" y="291.5" width="3" height="36" fill="#1A1AB4" stroke="#08084A" stroke-width="1"/>
<rect x="473" y="258" width="1" height="31" fill="#111"/>
<rect x="472.5" y="277.5" width="3" height="11" fill="#1A1AB4" stroke="#08084A" stroke-width="1"/>
<rect x="480" y="268" width="1" height="37" fill="#111"/>
<rect x="479.5" y="280.5" width="3" height="2" fill="#1A1AB4" stroke="#08084A" stroke-width="1"/>
<rect x="486" y="285" width="1" height="75" fill="#111"/>
<rect x="485.5" y="287.5" width="3" height="56" fill="#C8202A" stroke="#3A0610" stroke-width="1"/>
<rect x="492" y="342" width="1" height="33" fill="#111"/>
<rect x="491" y="347" width="4" height="1" fill="#151010"/>
<rect x="499" y="318" width="1" height="49" fill="#111"/>
<rect x="498.5" y="325.5" width="3" height="33" fill="#1A1AB4" stroke="#08084A" stroke-width="1"/>
<rect x="505" y="279" width="1" height="46" fill="#111"/>
<rect x="504.5" y="295.5" width="3" height="26" fill="#1A1AB4" stroke="#08084A" stroke-width="1"/>
<rect x="511" y="290" width="1" height="48" fill="#111"/>
<rect x="510.5" y="300.5" width="3" height="19" fill="#C8202A" stroke="#3A0610" stroke-width="1"/>
<rect x="518" y="241" width="1" height="68" fill="#111"/>
<rect x="517.5" y="247.5" width="3" height="61" fill="#1A1AB4" stroke="#08084A" stroke-width="1"/>
<rect x="524" y="205" width="1" height="61" fill="#111"/>
<rect x="523.5" y="211.5" width="3" height="42" fill="#1A1AB4" stroke="#08084A" stroke-width="1"/>
<rect x="530" y="204" width="1" height="25" fill="#111"/>
<rect x="529.5" y="218.5" width="3" height="2" fill="#1A1AB4" stroke="#08084A" stroke-width="1"/>
<rect x="537" y="182" width="1" height="49" fill="#111"/>
<rect x="536.5" y="206.5" width="3" height="17" fill="#1A1AB4" stroke="#08084A" stroke-width="1"/>
<rect x="543" y="180" width="1" height="41" fill="#111"/>
<rect x="542.5" y="196.5" width="3" height="8" fill="#1A1AB4" stroke="#08084A" stroke-width="1"/>
<rect x="549" y="196" width="1" height="39" fill="#111"/>
<rect x="548.5" y="206.5" width="3" height="11" fill="#1A1AB4" stroke="#08084A" stroke-width="1"/>
<rect x="556" y="162" width="1" height="66" fill="#111"/>
<rect x="555" y="204" width="4" height="1" fill="#151010"/>
<rect x="562" y="170" width="1" height="49" fill="#111"/>
<rect x="561.5" y="200.5" width="3" height="18" fill="#C8202A" stroke="#3A0610" stroke-width="1"/>
<rect x="568" y="203" width="1" height="30" fill="#111"/>
<rect x="567.5" y="209.5" width="3" height="6" fill="#1A1AB4" stroke="#08084A" stroke-width="1"/>
<rect x="575" y="213" width="1" height="70" fill="#111"/>
<rect x="574.5" y="214.5" width="3" height="59" fill="#C8202A" stroke="#3A0610" stroke-width="1"/>
<rect x="581" y="263" width="1" height="31" fill="#111"/>
<rect x="580.5" y="270.5" width="3" height="15" fill="#C8202A" stroke="#3A0610" stroke-width="1"/>
<rect x="587" y="254" width="1" height="32" fill="#111"/>
<rect x="586.5" y="268.5" width="3" height="11" fill="#1A1AB4" stroke="#08084A" stroke-width="1"/>
<rect x="594" y="264" width="1" height="53" fill="#111"/>
<rect x="593.5" y="271.5" width="3" height="43" fill="#C8202A" stroke="#3A0610" stroke-width="1"/>
<rect x="600" y="283" width="1" height="42" fill="#111"/>
<rect x="599.5" y="306.5" width="3" height="5" fill="#1A1AB4" stroke="#08084A" stroke-width="1"/>
<rect x="606" y="259" width="1" height="52" fill="#111"/>
<rect x="605.5" y="291.5" width="3" height="12" fill="#1A1AB4" stroke="#08084A" stroke-width="1"/>
<rect x="613" y="314" width="1" height="44" fill="#111"/>
<rect x="612.5" y="314.5" width="3" height="28" fill="#C8202A" stroke="#3A0610" stroke-width="1"/>
<rect x="619" y="339" width="1" height="39" fill="#111"/>
<rect x="618.5" y="345.5" width="3" height="9" fill="#C8202A" stroke="#3A0610" stroke-width="1"/>
<rect x="625" y="330" width="1" height="32" fill="#111"/>
<rect x="624.5" y="343.5" width="3" height="15" fill="#1A1AB4" stroke="#08084A" stroke-width="1"/>
<rect x="631" y="320" width="1" height="53" fill="#111"/>
<rect x="630.5" y="337.5" width="3" height="14" fill="#C8202A" stroke="#3A0610" stroke-width="1"/>
<rect x="638" y="320" width="1" height="38" fill="#111"/>
<rect x="637.5" y="352.5" width="3" height="3" fill="#1A1AB4" stroke="#08084A" stroke-width="1"/>
<rect x="644" y="301" width="1" height="40" fill="#111"/>
<rect x="643.5" y="308.5" width="3" height="31" fill="#1A1AB4" stroke="#08084A" stroke-width="1"/>
<rect x="650" y="305" width="1" height="35" fill="#111"/>
<rect x="649.5" y="308.5" width="3" height="17" fill="#C8202A" stroke="#3A0610" stroke-width="1"/>
<rect x="657" y="294" width="1" height="51" fill="#111"/>
<rect x="656.5" y="325.5" width="3" height="10" fill="#C8202A" stroke="#3A0610" stroke-width="1"/>
<rect x="663" y="303" width="1" height="32" fill="#111"/>
<rect x="662.5" y="314.5" width="3" height="16" fill="#1A1AB4" stroke="#08084A" stroke-width="1"/>
<rect x="669" y="265" width="1" height="58" fill="#111"/>
<rect x="668.5" y="276.5" width="3" height="39" fill="#1A1AB4" stroke="#08084A" stroke-width="1"/>
<rect x="676" y="244" width="1" height="26" fill="#111"/>
<rect x="675.5" y="253.5" width="3" height="16" fill="#1A1AB4" stroke="#08084A" stroke-width="1"/>
<rect x="682" y="257" width="1" height="33" fill="#111"/>
<rect x="681.5" y="266.5" width="3" height="16" fill="#C8202A" stroke="#3A0610" stroke-width="1"/>
<rect x="688" y="275" width="1" height="27" fill="#111"/>
<rect x="687.5" y="280.5" width="3" height="12" fill="#1A1AB4" stroke="#08084A" stroke-width="1"/>
<rect x="695" y="249" width="1" height="32" fill="#111"/>
<rect x="694.5" y="262.5" width="3" height="18" fill="#1A1AB4" stroke="#08084A" stroke-width="1"/>
<rect x="701" y="233" width="1" height="43" fill="#111"/>
<rect x="700.5" y="255.5" width="3" height="7" fill="#1A1AB4" stroke="#08084A" stroke-width="1"/>
<rect x="707" y="195" width="1" height="44" fill="#111"/>
<rect x="706.5" y="195.5" width="3" height="40" fill="#1A1AB4" stroke="#08084A" stroke-width="1"/>
<rect x="714" y="190" width="1" height="24" fill="#111"/>
<rect x="713.5" y="203.5" width="3" height="3" fill="#C8202A" stroke="#3A0610" stroke-width="1"/>
<rect x="720" y="180" width="1" height="29" fill="#111"/>
<rect x="719.5" y="185.5" width="3" height="22" fill="#1A1AB4" stroke="#08084A" stroke-width="1"/>
<rect x="726" y="186" width="1" height="15" fill="#111"/>
<rect x="725.5" y="189.5" width="3" height="2" fill="#1A1AB4" stroke="#08084A" stroke-width="1"/>
<rect x="733" y="180" width="1" height="33" fill="#111"/>
<rect x="732.5" y="189.5" width="3" height="3" fill="#C8202A" stroke="#3A0610" stroke-width="1"/>
<rect x="739" y="184" width="1" height="60" fill="#111"/>
<rect x="738.5" y="195.5" width="3" height="45" fill="#C8202A" stroke="#3A0610" stroke-width="1"/>
<rect x="745" y="200" width="1" height="46" fill="#111"/>
<rect x="744.5" y="212.5" width="3" height="20" fill="#1A1AB4" stroke="#08084A" stroke-width="1"/>
<rect x="752" y="215" width="1" height="38" fill="#111"/>
<rect x="751.5" y="215.5" width="3" height="20" fill="#C8202A" stroke="#3A0610" stroke-width="1"/>
<rect x="758" y="220" width="1" height="43" fill="#111"/>
<rect x="757.5" y="237.5" width="3" height="15" fill="#C8202A" stroke="#3A0610" stroke-width="1"/>
<rect x="764" y="236" width="1" height="22" fill="#111"/>
<rect x="763.5" y="240.5" width="3" height="7" fill="#1A1AB4" stroke="#08084A" stroke-width="1"/>
<rect x="771" y="209" width="1" height="47" fill="#111"/>
<rect x="770.5" y="239.5" width="3" height="5" fill="#C8202A" stroke="#3A0610" stroke-width="1"/>
<rect x="777" y="243" width="1" height="38" fill="#111"/>
<rect x="776.5" y="249.5" width="3" height="8" fill="#1A1AB4" stroke="#08084A" stroke-width="1"/>
<rect x="783" y="229" width="1" height="27" fill="#111"/>
<rect x="782.5" y="243.5" width="3" height="7" fill="#1A1AB4" stroke="#08084A" stroke-width="1"/>
<rect x="790" y="179" width="1" height="66" fill="#111"/>
<rect x="789.5" y="183.5" width="3" height="61" fill="#1A1AB4" stroke="#08084A" stroke-width="1"/>
<rect x="796" y="161" width="1" height="37" fill="#111"/>
<rect x="795.5" y="180.5" width="3" height="5" fill="#C8202A" stroke="#3A0610" stroke-width="1"/>
<rect x="802" y="169" width="1" height="23" fill="#111"/>
<rect x="801" y="183" width="4" height="1" fill="#151010"/>
<rect x="809" y="96" width="1" height="87" fill="#111"/>
<rect x="808.5" y="110.5" width="3" height="72" fill="#1A1AB4" stroke="#08084A" stroke-width="1"/>
<rect x="815" y="75" width="1" height="42" fill="#111"/>
<rect x="814.5" y="76.5" width="3" height="20" fill="#C8202A" stroke="#3A0610" stroke-width="1"/>
<rect x="821" y="76" width="1" height="33" fill="#111"/>
<rect x="820.5" y="86.5" width="3" height="12" fill="#C8202A" stroke="#3A0610" stroke-width="1"/>
<rect x="828" y="87" width="1" height="42" fill="#111"/>
<rect x="827.5" y="103.5" width="3" height="13" fill="#C8202A" stroke="#3A0610" stroke-width="1"/>
<rect x="834" y="113" width="1" height="38" fill="#111"/>
<rect x="833.5" y="126.5" width="3" height="17" fill="#C8202A" stroke="#3A0610" stroke-width="1"/>
<rect x="840" y="115" width="1" height="45" fill="#111"/>
<rect x="839.5" y="127.5" width="3" height="3" fill="#1A1AB4" stroke="#08084A" stroke-width="1"/>
<rect x="847" y="97" width="1" height="38" fill="#111"/>
<rect x="846.5" y="100.5" width="3" height="27" fill="#1A1AB4" stroke="#08084A" stroke-width="1"/>
<rect x="853" y="82" width="1" height="50" fill="#111"/>
<rect x="852.5" y="100.5" width="3" height="23" fill="#C8202A" stroke="#3A0610" stroke-width="1"/>
<rect x="859" y="113" width="1" height="33" fill="#111"/>
<rect x="858.5" y="128.5" width="3" height="16" fill="#1A1AB4" stroke="#08084A" stroke-width="1"/>
<rect x="866" y="93" width="1" height="54" fill="#111"/>
<rect x="865.5" y="94.5" width="3" height="17" fill="#C8202A" stroke="#3A0610" stroke-width="1"/>
<rect x="872" y="102" width="1" height="60" fill="#111"/>
<rect x="871.5" y="102.5" width="3" height="32" fill="#C8202A" stroke="#3A0610" stroke-width="1"/>
<rect x="878" y="122" width="1" height="30" fill="#111"/>
<rect x="877.5" y="137.5" width="3" height="4" fill="#1A1AB4" stroke="#08084A" stroke-width="1"/>
<rect x="884" y="137" width="1" height="38" fill="#111"/>
<rect x="883" y="144" width="4" height="1" fill="#151010"/>
<rect x="891" y="125" width="1" height="51" fill="#111"/>
<rect x="890.5" y="146.5" width="3" height="7" fill="#C8202A" stroke="#3A0610" stroke-width="1"/>
<rect x="897" y="145" width="1" height="49" fill="#111"/>
<rect x="896.5" y="150.5" width="3" height="38" fill="#C8202A" stroke="#3A0610" stroke-width="1"/>
<rect x="12.5" y="64.5" width="985" height="581" fill="none" stroke="#000" stroke-width="1"/>
<rect x="1000.5" y="182.5" width="50" height="11" fill="#FFFFFF" stroke="#B83030" stroke-width="1"/>
<text x="1002.5" y="193" font-size="11" font-weight="normal" fill="#14148C" text-anchor="start" textLength="45.5" lengthAdjust="spacingAndGlyphs">104.2700</text>
<rect x="12.5" y="692.5" width="11" height="11" fill="#3A6898" stroke="#2E5A80" stroke-width="1"/>
<rect x="26" y="688" width="1" height="21" fill="#6A6A6A"/>
<rect x="30.5" y="687.5" width="149.5" height="21" fill="#FFFFFF" stroke="#A8A8A8" stroke-width="1"/>
<circle cx="40" cy="695.2" r="3.1" stroke="#333" stroke-width="1.2" fill="none"/><path d="M37.8 697.6 L33.8 701.4" stroke="#333" stroke-width="1.4"/><path d="M40 703 h1.2 M42.4 703 h1.2 M44.8 703 h1.2" stroke="#222" stroke-width="1.2"/>
<text x="51.6" y="702" font-size="12" font-weight="normal" fill="#6D6D6D" text-anchor="start" textLength="104" lengthAdjust="spacingAndGlyphs">Search for instrument</text>
<rect x="198" y="688" width="1" height="20" fill="#A0A0A0"/>
<text x="202.8" y="702.8" font-size="12" font-weight="bold" fill="#111" text-anchor="start" textLength="139.3" lengthAdjust="spacingAndGlyphs">01 Jul 2014 19:00:00 EDT</text></svg></body></html>
